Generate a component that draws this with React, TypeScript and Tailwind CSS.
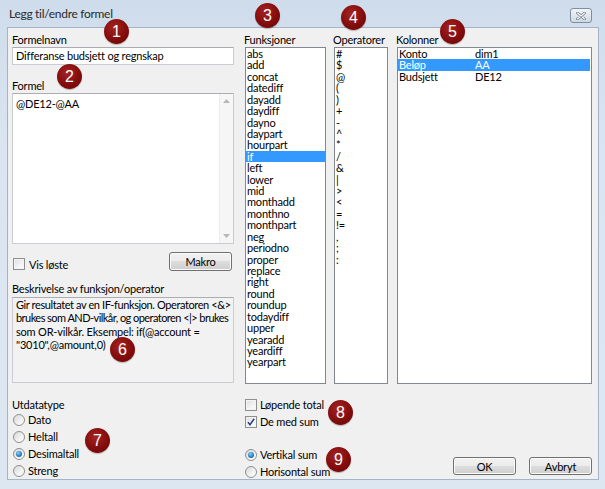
import React from 'react';

const funcs = [
  'abs', 'add', 'concat', 'datediff', 'dayadd', 'daydiff', 'dayno', 'daypart', 'hourpart', 'if',
  'left', 'lower', 'mid', 'monthadd', 'monthno', 'monthpart', 'neg', 'periodno', 'proper', 'replace',
  'right', 'round', 'roundup', 'todaydiff', 'upper', 'yearadd', 'yeardiff', 'yearpart',
];

const ops = ['#', '$', '@', '(', ')', '+', '-', '^', '*', '/', '&', '|', '>', '<', '=', '!=', ',', ';', ':'];

const columns = [
  { name: 'Konto', code: 'dim1' },
  { name: 'Beløp', code: 'AA' },
  { name: 'Budsjett', code: 'DE12' },
];

function Badge({ n, className }: { n: number; className: string }) {
  return (
    <div
      className={`absolute size-[25px] rounded-full flex items-center justify-center text-white text-[16px] leading-none tracking-normal font-['Liberation_Sans',sans-serif] bg-[radial-gradient(circle_at_42%_35%,#a52422_0%,#830c0c_55%,#620606_100%)] shadow-[0_1px_1px_rgba(0,0,0,0.25)] ${className}`}
    >
      {n}
    </div>
  );
}

function Checkbox({ checked = false }: { checked?: boolean }) {
  return (
    <span className="size-[12px] shrink-0 border border-[#8e8f8f] bg-[linear-gradient(135deg,#dcdcdc_0%,#f4f4f4_60%,#ffffff_100%)] shadow-[inset_0_0_0_1px_#f4f4f4] flex items-center justify-center">
      {checked && (
        <svg viewBox="0 0 10 10" className="size-[10px]">
          <path d="M2 5.2 L4 7.8 L8.2 1.8" fill="none" stroke="#2a3f86" strokeWidth="1.5" />
        </svg>
      )}
    </span>
  );
}

function Radio({ checked = false }: { checked?: boolean }) {
  return (
    <span className="size-[12px] shrink-0 rounded-full border border-[#8e8f8f] bg-[linear-gradient(135deg,#d8d8d8_0%,#f2f2f2_60%,#ffffff_100%)] flex items-center justify-center">
      {checked && (
        <span className="size-[6px] rounded-full bg-[radial-gradient(circle_at_40%_35%,#8fd0f5_0%,#2d86c8_50%,#0d4a82_100%)]" />
      )}
    </span>
  );
}

function WinButton({ label, className = '' }: { label: string; className?: string }) {
  return (
    <div
      className={`h-[18px] w-[63px] rounded-[3px] border border-[#707070] bg-[linear-gradient(to_bottom,#f2f2f2_0%,#ebebeb_50%,#dddddd_50%,#cfcfcf_100%)] shadow-[inset_0_0_0_1px_#fbfbfb] flex items-center justify-center leading-none ${className}`}
    >
      {label}
    </div>
  );
}

function Label({ text, className = '' }: { text: string; className?: string }) {
  return <div className={`h-[13px] leading-[13px] whitespace-nowrap ${className}`}>{text}</div>;
}

export default function App() {
  return (
    <div className="relative w-[605px] h-[489px] overflow-hidden bg-[linear-gradient(to_bottom,#cfdceb_0%,#dae5f1_30%,#dce7f2_100%)] font-['Lato',sans-serif] text-[11px] tracking-[-0.2px] text-black flex flex-col">
      {/* Title bar */}
      <div className="h-[27px] shrink-0 flex items-start justify-between pl-[9px] pr-[13px]">
        <div className="pt-[6px] text-[12px] leading-[16px] tracking-[-0.3px] text-[#2b2b2b]">Legg til/endre formel</div>
        <div className="mt-[8px] w-[22px] h-[15px] rounded-[3px] border border-[#7f8fa3] bg-[linear-gradient(to_bottom,#f1f4f8_0%,#dfe6ee_50%,#cfd8e3_100%)] flex items-center justify-center">
          <svg viewBox="0 0 10 8" className="w-[10px] h-[8px]">
            <path d="M1.5 1 L8.5 7 M8.5 1 L1.5 7" stroke="#6d7785" strokeWidth="2.6" strokeLinecap="round" />
            <path d="M1.5 1 L8.5 7 M8.5 1 L1.5 7" stroke="#ffffff" strokeWidth="1.1" strokeLinecap="round" />
          </svg>
        </div>
      </div>

      {/* Client area */}
      <div className="ml-[7px] w-[592px] h-[453px] shrink-0 bg-[#f0f0f0] border border-[#a3b4c8] pl-[4px] pr-[6px] pt-[5px] flex flex-col">
        {/* Top section */}
        <div className="flex shrink-0">
          {/* Left column */}
          <div className="w-[222px] flex flex-col">
            <Label text="Formelnavn" />
            <div className="mt-[1px] h-[18px] border border-[#c9ccd2] border-t-[#abadb3] bg-white pl-[3px] flex items-center whitespace-nowrap">
              Differanse budsjett og regnskap
            </div>
            <Label text="Formel" className="mt-[14px]" />
            <div className="mt-[1px] h-[151px] border border-[#c9ccd2] border-t-[#abadb3] bg-white flex">
              <div className="flex-1 pl-[3px] pt-[3px] leading-[13px]">@DE12-@AA</div>
              <div className="w-[14px] bg-[#f6f6f6] border-l border-[#ececec] flex flex-col justify-between items-center py-[5px]">
                <svg viewBox="0 0 7 4" className="w-[7px] h-[4px]">
                  <path d="M0 4 L3.5 0 L7 4 Z" fill="#b8b8b8" />
                </svg>
                <svg viewBox="0 0 7 4" className="w-[7px] h-[4px]">
                  <path d="M0 0 L3.5 4 L7 0 Z" fill="#b8b8b8" />
                </svg>
              </div>
            </div>
            <div className="mt-[8px] h-[20px] flex justify-between pr-[2px]">
              <div className="self-end flex items-center gap-[4px] pl-[1px] h-[14px] mb-[1px]">
                <Checkbox />
                <span className="leading-none">Vis løste</span>
              </div>
              <WinButton label="Makro" className="h-[19px]" />
            </div>
            <Label text="Beskrivelse av funksjon/operator" className="mt-[10px]" />
            <div className="mt-[2px] h-[86px] border border-[#c9ccd2] border-t-[#abadb3] bg-[#f2f2f2] pl-[3px] pt-[0px] leading-[13.4px] whitespace-nowrap">
              <div className="tracking-[-0.4px]">Gir resultatet av en IF-funksjon. Operatoren &lt;&amp;&gt;</div>
              <div className="tracking-[-0.55px]">brukes som AND-vilkår, og operatoren &lt;|&gt; brukes</div>
              <div>som OR-vilkår. Eksempel: if(@account =</div>
              <div>"3010",@amount,0)</div>
            </div>
          </div>

          {/* Funksjoner */}
          <div className="ml-[11px] w-[81px] flex flex-col">
            <Label text="Funksjoner" className="-ml-[1px]" />
            <div className="mt-[1px] h-[337px] border border-[#828790] bg-white overflow-hidden">
              {funcs.map((f) => (
                <div
                  key={f}
                  className={`h-[11.43px] leading-[11.43px] pl-[1px] whitespace-nowrap ${
                    f === 'if' ? 'bg-[#3399ff] text-white' : ''
                  }`}
                >
                  {f}
                </div>
              ))}
            </div>
          </div>

          {/* Operatorer */}
          <div className="ml-[8px] w-[54px] flex flex-col">
            <Label text="Operatorer" className="-ml-[1px]" />
            <div className="mt-[1px] h-[337px] border border-[#828790] bg-white pl-[1px] overflow-hidden">
              {ops.map((o) => (
                <div key={o} className="h-[11.43px] leading-[11.43px] whitespace-nowrap">
                  {o}
                </div>
              ))}
            </div>
          </div>

          {/* Kolonner */}
          <div className="ml-[9px] w-[195px] flex flex-col">
            <Label text="Kolonner" className="-ml-[1px]" />
            <div className="mt-[1px] h-[337px] border border-[#828790] bg-white overflow-hidden">
              {columns.map((c) => (
                <div
                  key={c.name}
                  className={`h-[11.43px] leading-[11.43px] flex whitespace-nowrap mr-[1px] ${
                    c.name === 'Beløp' ? 'bg-[#3399ff] text-white' : ''
                  }`}
                >
                  <span className="w-[77px] pl-[1px]">{c.name}</span>
                  <span>{c.code}</span>
                </div>
              ))}
            </div>
          </div>
        </div>

        {/* Bottom section */}
        <div className="flex flex-1">
          <div className="w-[222px] pt-[14px] flex flex-col">
            <Label text="Utdatatype" />
            {[
              { t: 'Dato', c: false },
              { t: 'Heltall', c: false },
              { t: 'Desimaltall', c: true },
              { t: 'Streng', c: false },
            ].map((r) => (
              <div key={r.t} className="h-[17px] shrink-0 flex items-center gap-[3px] pl-[1px]">
                <Radio checked={r.c} />
                <span className="leading-none">{r.t}</span>
              </div>
            ))}
          </div>

          <div className="ml-[11px] pt-[12px] flex flex-col">
            <div className="h-[17px] shrink-0 flex items-center gap-[3px]">
              <Checkbox />
              <span className="leading-none">Løpende total</span>
            </div>
            <div className="h-[17px] shrink-0 flex items-center gap-[3px]">
              <Checkbox checked />
              <span className="leading-none">De med sum</span>
            </div>
            <div className="h-[17px] shrink-0 mt-[16px] flex items-center gap-[3px]">
              <Radio checked />
              <span className="leading-none">Vertikal sum</span>
            </div>
            <div className="h-[17px] shrink-0 flex items-center gap-[3px]">
              <Radio />
              <span className="leading-none">Horisontal sum</span>
            </div>
          </div>

          <div className="flex-1 flex items-end justify-end gap-[13px] pb-[5px]">
            <WinButton label="OK" />
            <WinButton label="Avbryt" />
          </div>
        </div>
      </div>

      {/* Numbered callouts */}
      <Badge n={1} className="left-[104px] top-[19px]" />
      <Badge n={2} className="left-[57px] top-[64px]" />
      <Badge n={3} className="left-[255px] top-[3px]" />
      <Badge n={4} className="left-[341px] top-[5px]" />
      <Badge n={5} className="left-[440px] top-[19px]" />
      <Badge n={6} className="left-[110px] top-[337px]" />
      <Badge n={7} className="left-[85px] top-[428px]" />
      <Badge n={8} className="left-[328px] top-[400px]" />
      <Badge n={9} className="left-[326px] top-[447px]" />
    </div>
  );
}
